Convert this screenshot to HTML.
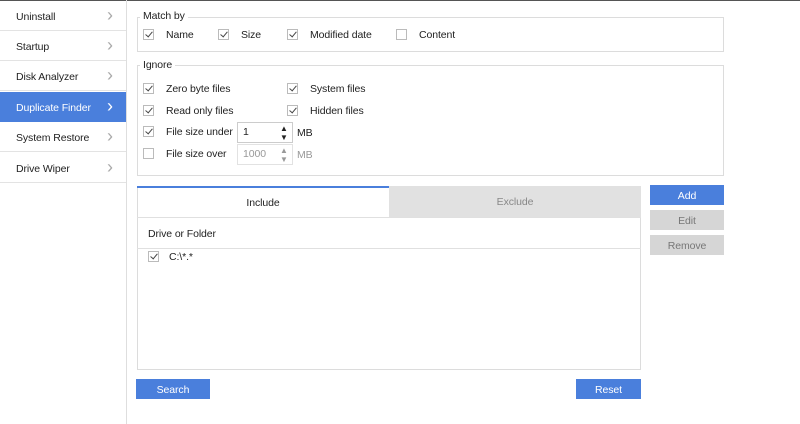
<!DOCTYPE html><html><head><style>
body{margin:0;width:800px;height:424px;background:#fff;font:10.5px "Liberation Sans",sans-serif;letter-spacing:-0.1px;color:#222;position:relative;overflow:hidden}
div,span{position:absolute;box-sizing:border-box}
.sb{left:0;width:126px;height:30px;border-bottom:1px solid #e3e3e3;padding:10px 0 0 16px}
.sb i{position:absolute;left:107px;top:4px;font-style:normal;color:#aaa;font-size:18px}
.cb{width:11px;height:11px;border:1px solid #bbb;background:#fff}
.cb.on::after{content:"";position:absolute;left:3px;top:0px;width:3px;height:6px;border:solid #444;border-width:0 1.5px 1.5px 0;transform:rotate(40deg)}
.grp{border:1px solid #dcdcdc}
.lbl{background:#fff;padding:0 3px}
.btn{text-align:center;padding-top:5px;height:20px;width:74px}
</style></head><body>
<div style="left:0;top:0;width:800px;height:1px;background:#555"></div>
<div style="left:126px;top:0;width:1px;height:424px;background:#dedede"></div>
<div class="sb" style="top:1px">Uninstall<i>›</i></div>
<div class="sb" style="top:31px">Startup<i>›</i></div>
<div class="sb" style="top:61px">Disk Analyzer<i>›</i></div>
<div class="sb" style="top:92px;background:#4a7fdc;color:#fff;border:none">Duplicate Finder<i style="color:#fff">›</i></div>
<div class="sb" style="top:122px">System Restore<i>›</i></div>
<div class="sb" style="top:153px">Drive Wiper<i>›</i></div>

<div class="grp" style="left:137px;top:17px;width:587px;height:35px"></div>
<div class="lbl" style="left:140px;top:10px">Match by</div>
<div class="cb on" style="left:143px;top:29px"></div><div style="left:166px;top:29px">Name</div>
<div class="cb on" style="left:218px;top:29px"></div><div style="left:241px;top:29px">Size</div>
<div class="cb on" style="left:287px;top:29px"></div><div style="left:310px;top:29px">Modified date</div>
<div class="cb" style="left:396px;top:29px"></div><div style="left:419px;top:29px">Content</div>

<div class="grp" style="left:137px;top:65px;width:587px;height:111px"></div>
<div class="lbl" style="left:140px;top:59px">Ignore</div>
<div class="cb on" style="left:143px;top:83px"></div><div style="left:166px;top:83px">Zero byte files</div>
<div class="cb on" style="left:287px;top:83px"></div><div style="left:310px;top:83px">System files</div>
<div class="cb on" style="left:143px;top:105px"></div><div style="left:166px;top:105px">Read only files</div>
<div class="cb on" style="left:287px;top:105px"></div><div style="left:310px;top:105px">Hidden files</div>
<div class="cb on" style="left:143px;top:126px"></div><div style="left:166px;top:126px">File size under</div>
<div style="left:237px;top:122px;width:56px;height:21px;border:1px solid #ccc;padding:3px 0 0 5px">1<span style="left:42px;top:1px;font-size:8px;line-height:9px">▲<br>▼</span></div><div style="left:297px;top:127px">MB</div>
<div class="cb" style="left:143px;top:148px"></div><div style="left:166px;top:148px">File size over</div>
<div style="left:237px;top:144px;width:56px;height:21px;border:1px solid #e2e2e2;padding:3px 0 0 5px;color:#999">1000<span style="left:42px;top:1px;font-size:8px;line-height:9px">▲<br>▼</span></div><div style="left:297px;top:149px;color:#999">MB</div>

<div style="left:137px;top:186px;width:504px;height:184px;border:1px solid #dcdcdc"></div>
<div style="left:137px;top:186px;width:252px;height:31px;border-top:2px solid #4a7fdc;text-align:center;padding-top:9px">Include</div>
<div style="left:389px;top:186px;width:252px;height:31px;background:#e1e1e1;color:#888;text-align:center;padding-top:10px">Exclude</div>
<div style="left:137px;top:217px;width:504px;height:1px;background:#e0e0e0"></div>
<div style="left:148px;top:228px">Drive or Folder</div>
<div style="left:137px;top:248px;width:504px;height:1px;background:#e0e0e0"></div>
<div class="cb on" style="left:148px;top:251px"></div><div style="left:169px;top:251px">C:\*.*</div>

<div class="btn" style="left:650px;top:185px;background:#4a7fdc;color:#fff">Add</div>
<div class="btn" style="left:650px;top:210px;background:#d6d6d6;color:#777">Edit</div>
<div class="btn" style="left:650px;top:235px;background:#d6d6d6;color:#777">Remove</div>
<div class="btn" style="left:136px;top:379px;background:#4a7fdc;color:#fff">Search</div>
<div class="btn" style="left:576px;top:379px;width:65px;background:#4a7fdc;color:#fff">Reset</div>
</body></html>
